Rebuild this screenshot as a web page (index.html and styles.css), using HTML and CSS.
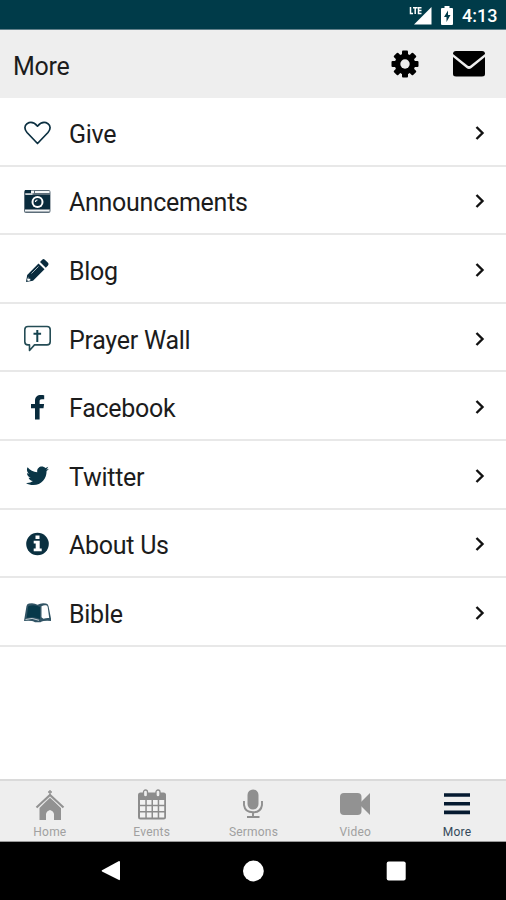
FILE: index.html
```html
<!DOCTYPE html>
<html lang="en">
<head>
    <meta charset="UTF-8">
    <meta name="viewport" content="width=device-width, initial-scale=1.0">
    <title>More</title>
    <link rel="stylesheet" href="styles.css">
</head>
<body>
<div class="status">
    <svg class="signal" width="24" height="20" viewBox="0 0 24 20">
        <path d="M22.500 2v17.500H5z" fill="#fff"/>
        <path d="M1.500 2v6.500H4M4 2.700h4.500M6.200 2.700v6.300M12.500 2.700H9.500v5.800h3M9.500 5.600h3" fill="none" stroke="#fff" stroke-width="1.500"/>
    </svg>
    <svg class="battery" width="12" height="19" viewBox="0 0 12 19">
        <path d="M3.500 0h5v2H11q1 0 1 1v15q0 1-1 1H1q-1 0-1-1V3q0-1 1-1h2.500z" fill="#fff"/>
        <path d="M7 4.500L3 11h2.500v5L9.500 9H7z" fill="#003b49"/>
    </svg>
    <span class="time">4:13</span>
</div>
<div class="header">
    <h1>More</h1>
    <svg class="gear" width="28" height="28" viewBox="0 0 28 28">
        <g fill="#000">
            <rect x="11" y="0.500" width="6" height="27" rx="1"/>
            <rect x="11" y="0.500" width="6" height="27" rx="1" transform="rotate(45 14 14)"/>
            <rect x="11" y="0.500" width="6" height="27" rx="1" transform="rotate(90 14 14)"/>
            <rect x="11" y="0.500" width="6" height="27" rx="1" transform="rotate(135 14 14)"/>
            <circle cx="14" cy="14" r="10.300"/>
        </g>
        <circle cx="14" cy="14" r="4.700" fill="#eee"/>
    </svg>
    <svg class="mail" width="32" height="26" viewBox="0 0 32 26">
        <path d="M3 0h26q3 0 3 3L17.500 14.500q-1.500 1-3 0L0 3q0-3 3-3z"/>
        <path d="M0 6l13.500 11q2.500 1.800 5 0L32 6v17q0 2.500-3 2.500H3q-3 0-3-2.500z"/>
    </svg>
</div>
<ul class="list">
    <li>
        <svg class="icon" viewBox="0 0 28 28">
            <path d="M14.500 24.500L4 13.500C1 10 1.500 6.500 4 4.700c3.500-2.200 7.500-1 10.500 2.500 3-3.500 7-4.700 10.500-2.500 2.500 1.800 3 5.300 0 8.800z" fill="none" stroke="#0b2f40" stroke-width="1.700" stroke-linejoin="round"/>
        </svg>
        <span>Give</span>
        <svg class="arrow" viewBox="0 0 10 16"><path d="M1.500 2l6 6-6 6"/></svg>
    </li>
    <li>
        <svg class="icon" viewBox="0 0 28 28">
            <rect x="1" y="3" width="26.500" height="23" rx="2" fill="#5c6d79"/>
            <path d="M8 3.800h3v2.500H8zM12 4h14.500v2H12zM2.500 6.500h7v1.200h-7zM2 22.800h24.500v1.800H2z" fill="#f4f6f7"/>
            <path d="M2 3h6v3H2zM2 8h25v14H2z" fill="#092b3d"/>
            <circle cx="14.500" cy="15" r="6" fill="#fff"/>
            <circle cx="14.500" cy="15" r="4" fill="#092b3d"/>
            <path d="M12.500 15a2 2 0 0 1 2-2" fill="none" stroke="#fff" stroke-width="1.200"/>
        </svg>
        <span>Announcements</span>
        <svg class="arrow" viewBox="0 0 10 16"><path d="M1.500 2l6 6-6 6"/></svg>
    </li>
    <li>
        <svg class="icon" viewBox="0 0 28 28">
            <path d="M3 26l1.200-7L15.500 7.500l6 5.800L10 24.800z" fill="#092b3d"/>
            <path d="M17 6l2.200-2.300q1.300-1.200 2.600 0l3.200 3.100q1.200 1.300 0 2.600L22.800 11.800z" fill="#092b3d"/>
            <path d="M5.300 20.500v2.300h2v1.800l-2.300.4-1-1z" fill="#fff"/>
            <path d="M8.500 17.500l7-7" stroke="#a5b5bd" stroke-width="1"/>
        </svg>
        <span>Blog</span>
        <svg class="arrow" viewBox="0 0 10 16"><path d="M1.500 2l6 6-6 6"/></svg>
    </li>
    <li>
        <svg class="icon" viewBox="0 0 28 28">
            <path d="M5 1.500h19q3.200 0 3.200 3.200v12q0 3.200-3.200 3.200H11.500L6.500 25.500v-5.600H5q-3.200 0-3.200-3.200v-12Q1.800 1.500 5 1.500z" fill="none" stroke="#244c55" stroke-width="1.600" stroke-linejoin="round"/>
            <path d="M14.300 5v12M10.500 8.700h7.600" stroke="#164450" stroke-width="2"/>
        </svg>
        <span>Prayer Wall</span>
        <svg class="arrow" viewBox="0 0 10 16"><path d="M1.500 2l6 6-6 6"/></svg>
    </li>
    <li>
        <svg class="icon" viewBox="0 0 28 28">
            <path d="M21.200 2.300v4h-2.400c-1.800 0-2.200.9-2.200 2.200V11h4.500l-.6 4.200h-3.900v11.300H12V15.200H8V11h4V7.800c0-3.800 2.400-5.800 5.800-5.800 1.600 0 3 .1 3.400.3z" fill="#092b3d"/>
        </svg>
        <span>Facebook</span>
        <svg class="arrow" viewBox="0 0 10 16"><path d="M1.500 2l6 6-6 6"/></svg>
    </li>
    <li>
        <svg class="icon" viewBox="0 0 28 28">
            <path transform="translate(3 2.300) scale(.0447)" d="M459.370 151.716c.325 4.548.325 9.097.325 13.645 0 138.720-105.583 298.558-298.558 298.558-59.452 0-114.680-17.219-161.137-47.106 8.447.974 16.568 1.299 25.340 1.299 49.055 0 94.213-16.568 130.274-44.832-46.132-.975-84.792-31.188-98.112-72.772 6.498.974 12.995 1.624 19.818 1.624 9.421 0 18.843-1.300 27.614-3.573-48.081-9.747-84.143-51.980-84.143-102.985v-1.299c13.969 7.797 30.214 12.670 47.431 13.319-28.264-18.843-46.781-51.005-46.781-87.391 0-19.492 5.197-37.360 14.294-52.954 51.655 63.675 129.300 105.258 216.365 109.807-1.624-7.797-2.599-15.918-2.599-24.040 0-57.828 46.782-104.934 104.934-104.934 30.213 0 57.502 12.670 76.670 33.137 23.715-4.548 46.456-13.320 66.599-25.340-7.798 24.366-24.366 44.833-46.132 57.827 21.117-2.273 41.584-8.122 60.426-16.243-14.292 20.791-32.161 39.308-52.628 54.253z" fill="#0a3546"/>
        </svg>
        <span>Twitter</span>
        <svg class="arrow" viewBox="0 0 10 16"><path d="M1.500 2l6 6-6 6"/></svg>
    </li>
    <li>
        <svg class="icon" viewBox="0 0 28 28">
            <circle cx="14.500" cy="14" r="11.300" fill="#0a3040"/>
            <path d="M12.500 5.500h4v3.500h-4zM10.700 10.800h6v7.700h2v2.800h-8v-2.800h2v-4.900h-2z" fill="#fff"/>
        </svg>
        <span>About Us</span>
        <svg class="arrow" viewBox="0 0 10 16"><path d="M1.500 2l6 6-6 6"/></svg>
    </li>
    <li>
        <svg class="icon" viewBox="0 0 28 28">
            <path d="M3.500 7Q4 5 6 4.600q5-1 8.500 1.200Q18.500 3.500 23 4.600q2 .4 2.500 2.400L28.500 22q-4.500-.6-8 0-2 .2-3 1.300h-5.500q-1.200-1.100-3-1.300-3.500-.6-8 0z" fill="#315465"/>
            <path d="M5 8.500q0-1.500 1.500-1.800Q12.500 5.500 17 8v12q-5-2.600-13.300-1.200z" fill="#07394a"/>
            <path d="M18.500 7.300q2.500-1.500 4.500-1 1.500.3 1.700 1.700l1.500 11q-3-.3-5.700.8-1.200-.8-2-1.600z" fill="#fff"/>
            <path d="M2.500 20.500Q9 18 16 21.300" fill="none" stroke="#c5d0d5" stroke-width="1"/>
        </svg>
        <span>Bible</span>
        <svg class="arrow" viewBox="0 0 10 16"><path d="M1.500 2l6 6-6 6"/></svg>
    </li>
</ul>
<div class="tabs">
    <div class="tab">
        <svg width="32" height="32" viewBox="0 0 32 32">
            <path d="M16 1v6M14 3h4" stroke="#929292" stroke-width="1.300"/>
            <path d="M16 8.500L27 19v12h-7v-6q-.5-3-4-4-3.500 1-4 4v6H5.500V19z" fill="#929292"/>
            <path d="M2.500 18.500L16 6l13.500 12.500" fill="none" stroke="#929292" stroke-width="2.200"/>
            <path d="M5 18.500L16 8.300l11 10.200" fill="none" stroke="#ddd" stroke-width=".8"/>
        </svg>
        <span>Home</span>
    </div>
    <div class="tab">
        <svg width="32" height="32" viewBox="0 0 32 32">
            <rect x="2" y="3.500" width="28" height="27" rx="2.500" fill="#8c8c8c"/>
            <path d="M4 11h5.300v4.700H4zM10.800 11h4.700v4.700h-4.700zM17 11h4.700v4.700H17zM23.200 11h5v4.700h-5zM4 17.200h5.300V22H4zM10.800 17.200h4.700V22h-4.700zM17 17.200h4.700V22H17zM23.200 17.200h5V22h-5zM4 23.500h5.300v5H4zM10.800 23.500h4.700v5h-4.700zM17 23.500h4.700v5H17zM23.200 23.500h5v5h-5z" fill="#f2f2f2"/>
            <rect x="7.500" y="1" width="4" height="7" rx="2" fill="#eee" stroke="#8c8c8c" stroke-width="1.300"/>
            <rect x="20" y="1" width="4" height="7" rx="2" fill="#eee" stroke="#8c8c8c" stroke-width="1.300"/>
        </svg>
        <span>Events</span>
    </div>
    <div class="tab">
        <svg width="32" height="32" viewBox="0 0 32 32">
            <rect x="10.500" y=".5" width="11" height="20" rx="5.500" fill="#8f8f8f"/>
            <path d="M7 12v4q1 7.300 9 7.300t9-7.300v-4M16 23.500V28M10 28h12.500" fill="none" stroke="#8f8f8f" stroke-width="1.900"/>
        </svg>
        <span>Sermons</span>
    </div>
    <div class="tab">
        <svg width="32" height="32" viewBox="0 0 32 32">
            <rect x="1" y="4" width="21.500" height="22" rx="4" fill="#929292"/>
            <path d="M22 13l9-9v22l-9-9z" fill="#929292"/>
        </svg>
        <span>Video</span>
    </div>
    <div class="tab active">
        <svg width="32" height="32" viewBox="0 0 32 32">
            <path d="M3 6h26M3 14.700h26M3 23.400h26" stroke="#051a30" stroke-width="3.600"/>
        </svg>
        <span>More</span>
    </div>
</div>
<div class="navbar">
    <svg width="20" height="22" viewBox="0 0 20 22"><path d="M2 10.300L19 1q1 0 1 1v17q0 1.500-1 1L2 11.500q-.8-.6 0-1.200z"/></svg>
    <svg width="22" height="22" viewBox="0 0 22 22"><circle cx="11.400" cy="11" r="10.400"/></svg>
    <svg width="20" height="22" viewBox="0 0 20 22"><rect x=".7" y="1.500" width="19" height="19" rx="2"/></svg>
</div>
</body>
</html>
```
FILE: styles.css
```css
*{
    margin: 0;
    padding: 0;
    box-sizing: border-box;
}
html,body{
    width: 100%;
    height: 100%;
}
body{
    display: flex;
    flex-direction: column;
    overflow: hidden;
    background: #fff;
    font-family: Roboto, "Liberation Sans", sans-serif;
    color: #1c1c1c;
}
svg{
    display: block;
    flex-shrink: 0;
}
.status{
    height: 30px;
    display: flex;
    justify-content: flex-end;
    align-items: center;
    padding-right: 9px;
    background: #003b49;
    border-bottom: 1px solid #62808a;
    color: #fff;
}
.signal{
    margin-top: 1px;
}
.battery{
    margin-left: 8px;
    margin-top: 1px;
}
.time{
    width: 35px;
    margin-left: 9px;
    padding-top: 2px;
    font-size: 18px;
    font-weight: 500;
    white-space: nowrap;
}
.header{
    height: 68px;
    display: flex;
    align-items: center;
    padding: 0 21px 0 13px;
    background: #eee;
}
.header h1{
    flex: 1;
    padding-top: 4px;
    font-size: 25px;
    font-weight: 400;
    letter-spacing: -.3px;
}
.mail{
    margin-left: 34px;
}
.list{
    list-style: none;
}
.list li{
    display: flex;
    align-items: center;
    height: 68.600px;
    padding: 3px 21px 0 23px;
    border-bottom: 2px solid #e8e8e8;
}
.list span{
    flex: 1;
    padding: 3px 0 0 18px;
    font-size: 25px;
    letter-spacing: -.27px;
}
.icon{
    width: 28px;
    height: 28px;
}
.arrow{
    width: 10px;
    height: 16px;
    fill: none;
    stroke: #111;
    stroke-width: 2.400;
}
.tabs{
    height: 63px;
    display: flex;
    margin: auto -2px 0 -1px;
    background: #eee;
    border-top: 2px solid #dadada;
    border-bottom: 1px solid #999;
}
.tab{
    flex: 1;
    display: flex;
    flex-direction: column;
    align-items: center;
    padding-top: 8px;
    font-size: 12px;
    line-height: 14px;
    color: #a0a0a0;
}
.tab span{
    margin-top: 4px;
    letter-spacing: .2px;
}
.active{
    color: #34495a;
}
.navbar{
    height: 58px;
    display: flex;
    justify-content: center;
    align-items: center;
    gap: 122px;
    background: #000;
    fill: #fff;
}
```
